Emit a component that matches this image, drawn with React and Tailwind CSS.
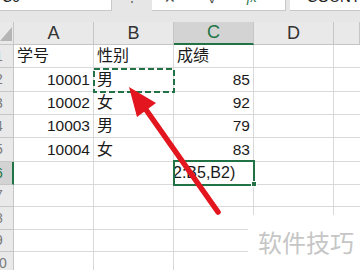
import React from 'react';

const GREEN = '#217346';

const rows = [
  ['学号', '性别', '成绩'],
  [10001, '男', 85],
  [10002, '女', 92],
  [10003, '男', 79],
  [10004, '女', 83],
  ['', '', ''],
  ['', '', ''],
  ['', '', ''],
  ['', '', ''],
  ['', '', ''],
];

function TopBar() {
  return (
    <div className="h-[22px] bg-[#e6e6e6] flex items-start overflow-hidden">
      {/* name box */}
      <div className="w-[112px] h-[11px] bg-white border-r border-b border-[#c8c8c8] overflow-hidden">
        <span className="block -mt-[10px] pl-[2px] text-[14px] leading-[14px] text-[#222]">C6</span>
      </div>
      <div className="w-[40px] h-[11px] overflow-hidden flex justify-center">
        <span className="block -mt-[9px] text-[12px] leading-[12px] text-[#555]">⋮</span>
      </div>
      {/* cancel / enter / fx */}
      <div className="w-[133px] h-[11px] bg-white border-b border-[#c8c8c8] overflow-hidden flex items-start">
        <span className="block ml-[12px] -mt-[9px] text-[14px] leading-[14px] text-[#444]">✕</span>
        <span className="block ml-[33px] -mt-[9px] text-[14px] leading-[14px] text-[#444]">✓</span>
        <span className="block ml-[28px] -mt-[9px] text-[14px] leading-[14px] italic font-['Liberation_Serif',serif] text-[#217346]">fx</span>
      </div>
      <div className="w-[5px] h-[11px] border-l border-[#c8c8c8]" />
      {/* formula input */}
      <div className="flex-1 h-[11px] bg-white border-b border-[#c8c8c8] overflow-hidden">
        <span className="block -mt-[10px] pl-[8px] text-[15px] leading-[14px] text-[#222] whitespace-nowrap">=COUNTIF(B2:B5,B2)</span>
      </div>
    </div>
  );
}

function Sheet() {
  const cols = ['A', 'B', 'C', 'D', ''];
  return (
    <div className="grid grid-cols-[14px_80px_80px_80px_80px_26px] grid-rows-[23px_23px_24px_23px_23px_24px_23px_22px_23px_22px_23px]">
      {/* corner */}
      <div className="bg-[#e9e9e9] border-r border-b border-[#c6c6c6] flex items-end justify-end pb-[3px] pr-[1px]">
        <svg width="12" height="14" viewBox="0 0 12 14">
          <polygon points="12,0 12,14 0,14" fill="#b5b5b5" />
        </svg>
      </div>
      {cols.map((c) => (
        <div
          key={c || 'E'}
          className={
            c === 'C'
              ? 'bg-[#d3d3d3] border-r border-[#c6c6c6] border-b-2 border-b-[#217346] flex items-center justify-center text-[18px] text-[#217346]'
              : 'bg-[#e9e9e9] border-r border-b border-[#c6c6c6] flex items-center justify-center text-[18px] text-[#333]'
          }
        >
          {c}
        </div>
      ))}
      {rows.map((r, i) => {
        const n = i + 1;
        const sel = n === 6;
        return (
          <React.Fragment key={n}>
            <div
              className={
                sel
                  ? 'bg-[#d3d3d3] border-b border-[#c6c6c6] border-r-2 border-r-[#217346] overflow-hidden flex items-center text-[14px] text-[#217346]'
                  : 'bg-[#e9e9e9] border-r border-b border-[#c6c6c6] overflow-hidden flex items-center text-[14px] text-[#7a7a7a]'
              }
            >
              <span className="block w-[26px] shrink-0 -ml-[14px] text-center">{n}</span>
            </div>
            {r.map((v, j) => (
              <div
                key={j}
                className={
                  typeof v === 'number'
                    ? 'border-r border-b border-[#d9d9d9] flex items-center justify-end pr-[3px] text-[15.5px] text-[#1a1a1a]'
                    : 'border-r border-b border-[#d9d9d9] flex items-center pl-[3px] text-[16px] text-[#1a1a1a]'
                }
              >
                {v}
              </div>
            ))}
            <div className="border-r border-b border-[#d9d9d9]" />
            <div className="border-b border-[#d9d9d9]" />
          </React.Fragment>
        );
      })}
    </div>
  );
}

export default function App() {
  return (
    <div className="relative w-[360px] h-[270px] overflow-hidden bg-white font-['Liberation_Sans','Noto_Sans_CJK_SC',sans-serif]">
      <TopBar />
      <Sheet />

      {/* active cell being edited */}
      <div className="absolute left-[173px] top-[160px] w-[82px] h-[26px] border-2 border-[#217346] overflow-hidden flex items-center">
        <span className="block -ml-[2px] text-[16px] text-[#1a1a1a] whitespace-nowrap">2:B5,B2)</span>
      </div>
      <div className="absolute left-[251px] top-[181px] w-[6px] h-[6px] bg-[#217346] border border-white" />

      {/* copy marquee + arrow */}
      <svg className="absolute left-0 top-0 pointer-events-none" width="360" height="270">
        <rect x="94" y="69" width="80" height="23" fill="none" stroke={GREEN} strokeWidth="2" strokeDasharray="6 3" />
        <line x1="218" y1="212" x2="142" y2="104" stroke="#e3161f" strokeWidth="5.5" strokeLinecap="round" />
        <polygon points="129,87 156,103 137,117" fill="#e3161f" />
      </svg>

      {/* watermark */}
      <div className="absolute left-[248px] top-[215px] w-[112px] h-[55px] bg-white">
        <span className="block pl-[10px] pt-[15px] text-[24px] leading-none text-[#c6c6c6] font-['Noto_Sans_CJK_SC',sans-serif]">软件技巧</span>
      </div>
    </div>
  );
}
